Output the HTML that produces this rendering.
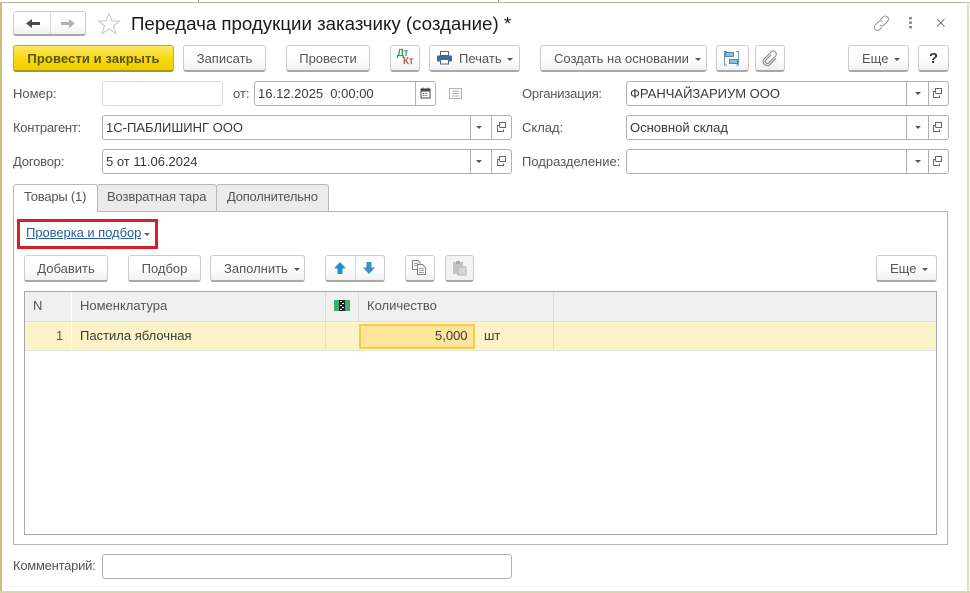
<!DOCTYPE html>
<html lang="ru"><head><meta charset="utf-8"><title>Передача продукции заказчику</title>
<style>
html,body{margin:0;padding:0;background:#fff}
body{width:970px;height:593px;position:relative;overflow:hidden;font-family:"Liberation Sans",Arial,sans-serif;font-size:13px;color:#555}
.a{position:absolute;box-sizing:border-box}
.t{position:absolute;white-space:nowrap;line-height:16px;height:16px}
.b{position:absolute;box-sizing:border-box;height:27px;border:1px solid #cdcdcd;border-bottom:2px solid #a8a8a8;border-radius:3px;background:linear-gradient(#fff,#fff 50%,#f1f1f1);text-align:center;line-height:25px;color:#555;white-space:nowrap}
.m{text-align:left;padding-left:13px}
.f{position:absolute;box-sizing:border-box;height:25px;border:1px solid #b0b0b0;border-radius:3px;background:#fff;color:#3a3a3a;line-height:23px;padding-left:3px;white-space:nowrap}
.d{position:absolute;top:0;bottom:0;width:1px;background:#b0b0b0}
.tri{display:inline-block;width:0;height:0;border:3px solid transparent;border-top:3px solid #555;border-bottom:0;vertical-align:2px;margin-left:6px}
.s{letter-spacing:-.18px}
svg{position:absolute;overflow:visible}
</style></head><body>
<!-- window frame -->
<div class="a" style="left:198px;top:0;width:1px;height:2px;background:#999"></div>
<div class="a" style="left:498px;top:0;width:1px;height:2px;background:#999"></div>
<div class="a" style="left:0;top:2px;width:970px;height:1px;background:#b5b5a5"></div>
<div class="a" style="left:0;top:2px;width:2px;height:590px;background:#c9c07e"></div>
<div class="a" style="left:967px;top:2px;width:2px;height:590px;background:#e0dfb0"></div>
<div class="a" style="left:0;top:591px;width:970px;height:2px;background:#d8d6a8"></div>

<!-- nav -->
<div class="b" style="left:13px;top:11px;width:73px;height:25px"></div>
<div class="a" style="left:50px;top:12px;width:1px;height:22px;background:#d8d8d8"></div>
<svg style="left:26px;top:18px" width="14" height="11"><path d="M0 5.500L6 1V4H14V7H6V10Z" fill="#4a4a4a"/></svg>
<svg style="left:61px;top:18px" width="14" height="11"><path d="M14 5.500L8 1V4H0V7H8V10Z" fill="#b2b2b2"/></svg>
<svg style="left:97px;top:12px" width="24" height="23"><path d="M12 1.500L15 9H22.500L16.500 13.800L18.800 21.500L12 17L5.200 21.500L7.500 13.800L1.500 9H9Z" fill="#fff" stroke="#c6c6c6" stroke-width="1"/></svg>
<div class="t" style="left:131px;top:13px;height:22px;line-height:22px;font-size:18.7px;color:#1a1a1a">Передача продукции заказчику (создание) *</div>

<!-- title right icons -->
<svg style="left:873px;top:15px" width="17" height="17" fill="none" stroke="#8a8a8a" stroke-width=".9"><path d="M7.500 4.500L10 2C11.300 .8 13.200 .8 14.500 2C15.800 3.300 15.800 5.200 14.500 6.500L11 10C9.800 11.200 8 11.200 6.800 10"/><path d="M9.500 6.500C8.300 5.500 6.700 5.500 5.500 6.700L2.200 10C1 11.300 1 13.200 2.200 14.500C3.500 15.800 5.400 15.800 6.700 14.500L9 12.200"/></svg>
<svg style="left:908px;top:17px" width="5" height="12"><rect x="1" y="0" width="3" height="2.400" fill="#8a8a8a"/><rect x="1" y="4.500" width="3" height="2.400" fill="#8a8a8a"/><rect x="1" y="9" width="3" height="2.400" fill="#8a8a8a"/></svg>
<svg style="left:936px;top:18px" width="10" height="10"><path d="M1 1L8.500 8.500M8.500 1L1 8.500" stroke="#7a7a7a" stroke-width="1"/></svg>

<!-- command bar -->
<div class="b" style="left:13px;top:45px;width:161px;border:1px solid #cfae00;border-bottom:2px solid #ad9414;background:linear-gradient(#fbe866,#f8d80a 55%,#f0cf00);font-weight:bold;color:#5a5318;letter-spacing:.1px">Провести и закрыть</div>
<div class="b" style="left:183px;top:45px;width:83px">Записать</div>
<div class="b" style="left:286px;top:45px;width:84px">Провести</div>
<div class="b" style="left:390px;top:45px;width:30px"></div>
<div class="t" style="left:397px;top:49px;font-size:10px;color:#1f9a55;line-height:10px;height:10px;-webkit-text-stroke:.3px #1f9a55">Дт</div>
<div class="t" style="left:403px;top:57px;font-size:10px;color:#c4504d;line-height:10px;height:10px;-webkit-text-stroke:.3px #c4504d">Кт</div>
<div class="b" style="left:429px;top:45px;width:91px;text-align:left;padding-left:29px">Печать<i class="tri" style="margin-left:5px"></i></div>
<svg style="left:437px;top:51px" width="15" height="14"><rect x="3.500" y=".5" width="8" height="4" fill="#fff" stroke="#45698e"/><rect x="0" y="4.500" width="15" height="6" rx="1" fill="#45698e"/><rect x="3.500" y="8.500" width="8" height="4.500" fill="#fff" stroke="#45698e"/></svg>
<div class="b m" style="left:540px;top:45px;width:167px">Создать на основании<i class="tri"></i></div>
<div class="b" style="left:716px;top:45px;width:33px"></div>
<svg style="left:724px;top:51px" width="15" height="15" fill="none"><path d="M3 .5H.5V14H3M12 .5H14.500V14H12" stroke="#5d97c0"/><rect x="1.500" y="1.500" width="8" height="4" fill="#8dbbdb" stroke="#4f8ab5"/><rect x="5.500" y="8.500" width="8" height="4" fill="#8dbbdb" stroke="#4f8ab5"/></svg>
<div class="b" style="left:755px;top:45px;width:30px"></div>
<svg style="left:762px;top:50px" width="16" height="16" fill="none" stroke="#8f8f8f" stroke-width="1.200"><g transform="rotate(45 8 8)"><path d="M6.500 5V12.500C6.500 14.800 10.500 14.800 10.500 12.500V2.500C10.500 -.8 4.500 -.8 4.500 2.500V13C4.500 17.500 12.500 17.500 12.500 13V4"/></g></svg>
<div class="b m" style="left:848px;top:45px;width:61px">Еще<i class="tri"></i></div>
<div class="b" style="left:918px;top:45px;width:31px;font-weight:bold;font-size:15px;color:#333">?</div>

<!-- form rows -->
<div class="t" style="left:13px;top:86px">Номер:</div>
<div class="f" style="left:102px;top:81px;width:121px;border-color:#dcdcdc"></div>
<div class="t" style="left:233px;top:86px">от:</div>
<div class="f" style="left:254px;top:81px;width:182px">16.12.2025&nbsp; 0:00:00<div class="d" style="left:160px"></div></div>
<svg style="left:420px;top:87px" width="11" height="12"><rect x="1" y="2" width="9" height="9" fill="none" stroke="#444"/><rect x="1" y="2" width="9" height="2.500" fill="#444"/><path d="M3 .5V3M8 .5V3" stroke="#444"/><path d="M3 6.500H8M3 8.500H8" stroke="#666" stroke-dasharray="1.400 1"/></svg>
<svg style="left:449px;top:88px" width="14" height="12"><rect x=".5" y=".5" width="12" height="10" fill="#fff" stroke="#aab3bb"/><path d="M3 3H10M3 5.500H10M3 8H10" stroke="#aab3bb"/></svg>

<div class="t s" style="left:522px;top:86px">Организация:</div>
<div class="f" style="left:626px;top:81px;width:323px">ФРАНЧАЙЗАРИУМ ООО<div class="d" style="left:279px"></div><div class="d" style="left:301px"></div></div>
<div class="t" style="left:13px;top:120px;letter-spacing:-.27px">Контрагент:</div>
<div class="f" style="left:102px;top:115px;width:410px">1С-ПАБЛИШИНГ ООО<div class="d" style="left:367px"></div><div class="d" style="left:388px"></div></div>
<div class="t" style="left:522px;top:120px">Склад:</div>
<div class="f" style="left:626px;top:115px;width:323px">Основной склад<div class="d" style="left:279px"></div><div class="d" style="left:301px"></div></div>
<div class="t s" style="left:13px;top:154px">Договор:</div>
<div class="f" style="left:102px;top:149px;width:410px">5 от 11.06.2024<div class="d" style="left:367px"></div><div class="d" style="left:388px"></div></div>
<div class="t" style="left:522px;top:154px">Подразделение:</div>
<div class="f" style="left:626px;top:149px;width:323px"><div class="d" style="left:279px"></div><div class="d" style="left:301px"></div></div>

<!-- field glyphs -->
<svg style="left:0;top:0" width="970" height="593">
<g fill="#555">
<path d="M476 126h6l-3 3zM476 160h6l-3 3zM915 92h6l-3 3zM915 126h6l-3 3zM915 160h6l-3 3z"/>
</g>
<g fill="none" stroke="#666">
<path d="M499.500 125.500h-2v6h6v-2M499.500 127.500v-5h6v5h-5.500"/>
<path d="M499.500 159.500h-2v6h6v-2M499.500 161.500v-5h6v5h-5.500"/>
<path d="M935.500 91.500h-2v6h6v-2M935.500 93.500v-5h6v5h-5.500"/>
<path d="M935.500 125.500h-2v6h6v-2M935.500 127.500v-5h6v5h-5.500"/>
<path d="M935.500 159.500h-2v6h6v-2M935.500 161.500v-5h6v5h-5.500"/>
</g>
</svg>

<!-- tabs -->
<div class="a" style="left:13px;top:211px;width:935px;height:334px;border:1px solid #b4b4b4;background:#fff"></div>
<div class="a" style="left:97px;top:184px;width:120px;height:28px;border:1px solid #b8b8b8;border-radius:3px 3px 0 0;background:#ebebeb"></div>
<div class="a" style="left:216px;top:184px;width:113px;height:28px;border:1px solid #b8b8b8;border-radius:3px 3px 0 0;background:#ebebeb"></div>
<div class="a" style="left:13px;top:184px;width:85px;height:28px;border:1px solid #b8b8b8;border-bottom:0;border-radius:3px 3px 0 0;background:#fff"></div>
<div class="t" style="left:24px;top:189px;letter-spacing:-.2px">Товары (1)</div>
<div class="t s" style="left:107px;top:189px;letter-spacing:-.13px">Возвратная тара</div>
<div class="t s" style="left:227px;top:189px;letter-spacing:-.22px">Дополнительно</div>

<!-- highlighted link -->
<div class="a" style="left:17px;top:219px;width:141px;height:30px;border:3px solid #d8202c"></div>
<div class="t" style="left:26px;top:225px;color:#2a5c9a;text-decoration:underline;letter-spacing:-.05px">Проверка и подбор</div>
<div class="a" style="left:144px;top:233px;width:0;height:0;border:3px solid transparent;border-top:3px solid #3a6aa5;border-bottom:0"></div>

<!-- table bar -->
<div class="b" style="left:24px;top:255px;width:84px">Добавить</div>
<div class="b" style="left:128px;top:255px;width:73px">Подбор</div>
<div class="b m" style="left:210px;top:255px;width:95px">Заполнить<i class="tri"></i></div>
<div class="b" style="left:325px;top:255px;width:60px"></div>
<div class="a" style="left:355px;top:256px;width:1px;height:24px;background:#d8d8d8"></div>
<svg style="left:333px;top:261px" width="14" height="14"><path d="M7 1L13 7.500H9.500V13H4.500V7.500H1Z" fill="#1f8fd0"/></svg>
<svg style="left:362px;top:261px" width="14" height="14"><path d="M7 13L13 6.500H9.500V1H4.500V6.500H1Z" fill="#3d8dc9"/></svg>
<div class="b" style="left:405px;top:255px;width:30px"></div>
<svg style="left:412px;top:260px" width="16" height="16" fill="#fff" stroke="#808080"><path d="M.5 .5H6L8 2.500V9.500H.5Z"/><path d="M2 3.500H6M2 5.500H6" stroke-width=".7"/><path d="M5.500 4.500H10.500L13.500 7.500V14.500H5.500Z"/><path d="M7 8.500H12M7 10.500H12M7 12.500H12" stroke-width=".7"/></svg>
<div class="b" style="left:445px;top:255px;width:29px;background:#f3f3f3"></div>
<svg style="left:452px;top:260px" width="15" height="16"><rect x="1" y="2" width="10" height="12" fill="#c4c4c4"/><rect x="4" y="1" width="4" height="3" fill="#a8a8a8"/><rect x="6" y="7" width="8" height="8" fill="#d8d8d8" stroke="#b4b4b4"/></svg>
<div class="b m" style="left:876px;top:255px;width:61px">Еще<i class="tri"></i></div>

<!-- table -->
<div class="a" style="left:24px;top:291px;width:913px;height:244px;border:1px solid #a8a8a8;background:#fff"></div>
<div class="a" style="left:25px;top:292px;width:911px;height:29px;background:#f0f0f0"></div>
<div class="a" style="left:25px;top:321px;width:911px;height:1px;background:#e0e0e0"></div>
<div class="a" style="left:71px;top:292px;width:1px;height:29px;background:#fff"></div>
<div class="a" style="left:325px;top:292px;width:1px;height:59px;background:#dcdcd4"></div>
<div class="a" style="left:358px;top:292px;width:1px;height:29px;background:#dcdcdc"></div>
<div class="a" style="left:553px;top:292px;width:1px;height:59px;background:#dcdcd4"></div>
<div class="t" style="left:33px;top:298px">N</div>
<div class="t" style="left:80px;top:298px">Номенклатура</div>
<svg style="left:334px;top:300px" width="16" height="11"><rect width="16" height="11" fill="#3fae6e"/><rect x="5" y="0" width="6" height="11" fill="#222"/><path d="M6 1.500H8M8 3.500H10M6 5.500H8M8 7.500H10M6 9.500H8" stroke="#fff"/></svg>
<div class="t" style="left:367px;top:298px">Количество</div>
<div class="a" style="left:25px;top:322px;width:911px;height:29px;background:#fdf3c8"></div>
<div class="a" style="left:25px;top:350px;width:911px;height:1px;background:#e2e2d8"></div>
<div class="a" style="left:71px;top:322px;width:1px;height:28px;background:#fff"></div>
<div class="a" style="left:325px;top:322px;width:1px;height:28px;background:#e2e0cc"></div>
<div class="a" style="left:553px;top:322px;width:1px;height:28px;background:#e2e0cc"></div>
<div class="t" style="left:56px;top:328px">1</div>
<div class="t" style="left:80px;top:328px;color:#3a3a3a">Пастила яблочная</div>
<div class="a" style="left:359px;top:324px;width:116px;height:25px;border:2px solid #f2cd4e;background:#fee59a"></div>
<div class="t" style="left:435px;top:328px;color:#3a3a3a">5,000</div>
<div class="t" style="left:484px;top:328px;color:#3a3a3a">шт</div>

<!-- comment -->
<div class="t" style="left:13px;top:558px;letter-spacing:-.25px">Комментарий:</div>
<div class="f" style="left:102px;top:554px;width:410px"></div>
</body></html>
